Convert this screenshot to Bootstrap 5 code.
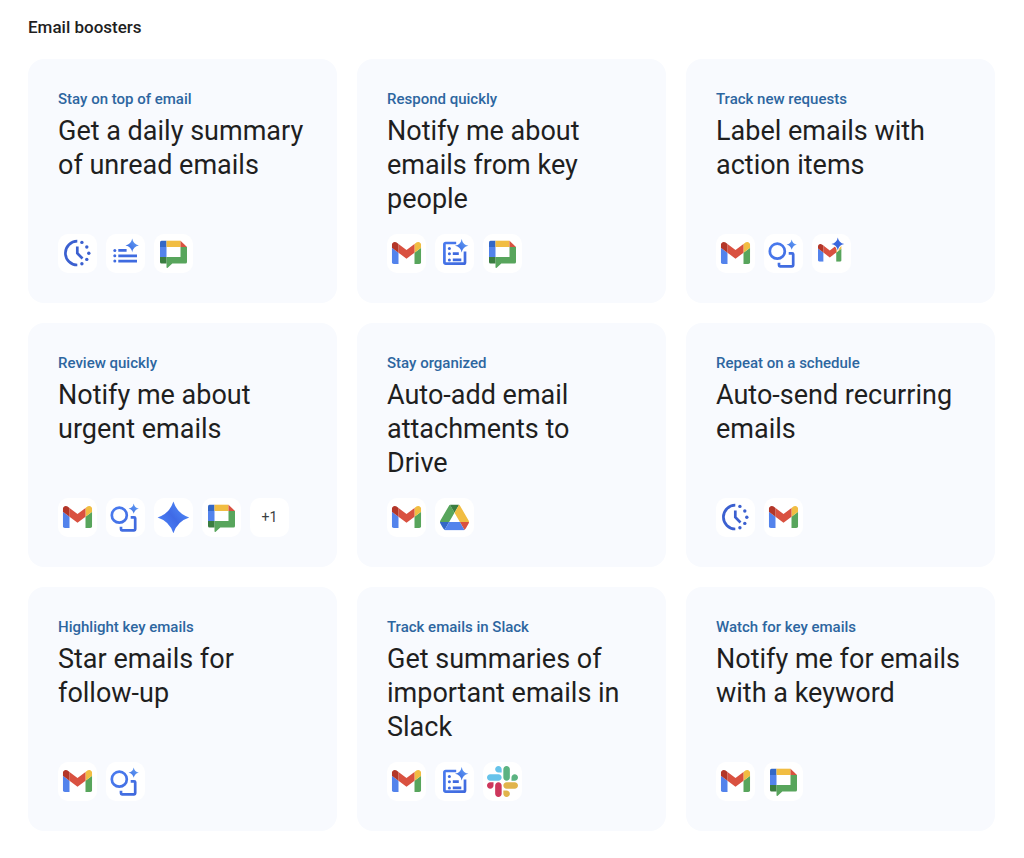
<!DOCTYPE html>
<html lang="en">
<head>
<meta charset="utf-8">
<meta name="viewport" content="width=device-width, initial-scale=1">
<title>Email boosters</title>
<link href="https://cdn.jsdelivr.net/npm/bootstrap@5.3.0/dist/css/bootstrap.min.css" rel="stylesheet">
<style>
  body { font-family: Roboto, "Liberation Sans", sans-serif; color: #1f1f1f; background: #fff; }
  .page { padding: 15px 29px 28px 28px; }
  .section-title { font-size: 17px; line-height: 24px; font-weight: 500; margin-bottom: 20px; }
  .booster-grid { --bs-gutter-x: 20px; --bs-gutter-y: 20px; }
  .booster { min-height: 244px; padding: 30px; border: 0; border-radius: 16px; background: #f8fafe; color: inherit; }
  .booster:hover { background: #f0f4fc; }
  .eyebrow { font-size: 15px; line-height: 20px; font-weight: 500; color: #2d66a0; margin-bottom: 5px; }
  .booster-title { font-size: 27px; line-height: 34px; font-weight: 400; margin-bottom: 16px; }
  .tiles { gap: 9px; }
  .tile { width: 39px; height: 39px; border-radius: 10px; background: #fff; font-size: 14px; color: #3c4043; }
  .tile svg { width: 39px; height: 39px; display: block; }
</style>
</head>
<body>
<svg width="0" height="0" class="position-absolute" aria-hidden="true">
  <defs>
    <linearGradient id="spark" gradientUnits="userSpaceOnUse" x1="20" y1="17" x2="33" y2="6">
      <stop offset="0" stop-color="#3563e0"/><stop offset="1" stop-color="#67a3f5"/>
    </linearGradient>
    <linearGradient id="line" gradientUnits="userSpaceOnUse" x1="6" y1="8" x2="32" y2="32">
      <stop offset="0" stop-color="#4a7cf0"/><stop offset="1" stop-color="#3f68dc"/>
    </linearGradient>
    <linearGradient id="star" gradientUnits="userSpaceOnUse" x1="8" y1="28" x2="30" y2="10">
      <stop offset="0" stop-color="#4c80f5"/><stop offset=".5" stop-color="#3f6ae6"/><stop offset="1" stop-color="#4d86f5"/>
    </linearGradient>
    <symbol id="i-clock" viewBox="0 0 39 39">
      <g fill="none" stroke="#3b60d0" stroke-width="2.7">
        <path d="M19.3 7.2A11.9 11.9 0 0 0 19.3 31"/><path d="M19.3 12.5v6.800l5.200 5.200"/>
      </g>
      <g fill="#3b60d0"><circle cx="23.9" cy="8.4" r="1.7"/><circle cx="28.8" cy="13" r="1.7"/><circle cx="30.8" cy="19.2" r="1.7"/><circle cx="28.8" cy="25.4" r="1.7"/><circle cx="23.9" cy="29.8" r="1.7"/></g>
    </symbol>
    <symbol id="i-list" viewBox="0 0 39 39">
      <g fill="#3f6be0"><circle cx="8.8" cy="16.4" r="1.5"/><circle cx="8.8" cy="21.8" r="1.5"/><circle cx="8.8" cy="27.1" r="1.5"/>
      <path d="M12.3 15.1h8.300v2.700h-8.300zM12.300 20.500H31v2.700H12.300zM12.300 25.800H31v2.700H12.300z"/></g>
      <path fill="url(#spark)" d="M26.200 4.600q1 5.800 6.700 6.800-5.700 1-6.700 6.800-1-5.800-6.700-6.800 5.700-1 6.700-6.800z"/>
    </symbol>
    <symbol id="i-doc" viewBox="0 0 39 39">
      <path fill="none" stroke="url(#line)" stroke-width="2.700" d="M21.200 9H10.600a1.200 1.200 0 0 0-1.200 1.200v18.200a1.200 1.200 0 0 0 1.200 1.200h18.200a1.200 1.200 0 0 0 1.200-1.200V17.500"/>
      <g fill="#3f6be0"><circle cx="14.400" cy="14.400" r="1.500"/><circle cx="14.400" cy="19.700" r="1.500"/><circle cx="14.400" cy="26" r="1.500"/>
      <path d="M17.800 18.300h6v2.700h-6zM17.800 24.600h8.500v2.700h-8.500z"/></g>
      <path fill="url(#spark)" d="M26.700 4.900q1 5.800 6.700 6.800-5.700 1-6.700 6.800-1-5.800-6.700-6.800 5.700-1 6.700-6.800z"/>
    </symbol>
    <symbol id="i-extract" viewBox="0 0 39 39">
      <g fill="none" stroke="url(#line)" stroke-width="2.700"><circle cx="13.300" cy="17.200" r="7.500"/>
      <path d="M24.700 19.300h3.500a1 1 0 0 1 1 1v11a1 1 0 0 1-1 1H16a1 1 0 0 1-1-1v-2.600"/></g>
      <path fill="url(#spark)" d="M27.700 5.600q.8 4.300 5.100 5.100-4.300.8-5.100 5.100-.8-4.300-5.100-5.100 4.300-.8 5.100-5.100z"/>
    </symbol>
    <symbol id="i-star" viewBox="0 0 39 39">
      <path fill="url(#star)" d="M19.400 3.600Q23.200 15.600 35.200 19.400 23.200 23.200 19.400 35.200 15.600 23.200 3.600 19.400 15.600 15.600 19.400 3.600z"/>
    </symbol>
    <symbol id="i-chat" viewBox="0 0 39 39">
      <path fill="#5383ec" d="M6 13h6.500v10H6z"/>
      <path fill="#3367c6" d="M7.500 6.700h5V13H6V8.200a1.500 1.500 0 0 1 1.500-1.500z"/>
      <path fill="#f1bd42" d="M12.500 6.700h14V13h-14z"/>
      <path fill="#d95140" d="M26.500 6.700l6.500 6.300h-6.500z"/>
      <path fill="#58a55c" d="M26.500 13H33v14.900a1.500 1.500 0 0 1-1.500 1.500H18.300l-4.600 4.400q-1 .8-1.200-.5V23h14z"/>
      <path fill="#3a7d40" d="M6 23h6.500v6.400h-5A1.500 1.500 0 0 1 6 27.900z"/>
    </symbol>
    <symbol id="gmail-mark" viewBox="52 42 88 66">
      <path fill="#5383ec" d="M58 108h14V74L52 59v43c0 3.320 2.690 6 6 6"/>
      <path fill="#58a55c" d="M120 108h14c3.320 0 6-2.690 6-6V59l-20 15"/>
      <path fill="#f1bd42" d="M120 48v26l20-15v-8c0-7.420-8.470-11.650-14.400-7.200"/>
      <path fill="#d95140" d="M72 74V48l24 18 24-18v26L96 92"/>
      <path fill="#b33628" d="M52 51v8l20 15V48l-5.600-4.200c-5.940-4.450-14.400-.220-14.400 7.200"/>
    </symbol>
    <symbol id="i-gmail" viewBox="0 0 39 39"><use href="#gmail-mark" x="4.800" y="8" width="29.400" height="22"/></symbol>
    <symbol id="i-gmail-ai" viewBox="0 0 39 39">
      <use href="#gmail-mark" x="6" y="10" width="23.600" height="17.700"/>
      <path fill="#fff" d="M25.800 1.500q1.300 7 8.300 8.400-7 1.400-8.300 8.400-1.300-7-8.300-8.400 7-1.400 8.300-8.400z"/>
      <path fill="#3b68dd" d="M25.800 3.500q1 5.500 6.400 6.400-5.400 1-6.400 6.400-1-5.400-6.400-6.400 5.400-.900 6.400-6.400z"/>
    </symbol>
    <symbol id="drive-mark" viewBox="0 0 87.300 78">
      <path fill="#3367c6" d="M6.600 66.850l3.850 6.650c.8 1.400 1.950 2.500 3.300 3.300L27.500 53H0c0 1.550.4 3.100 1.200 4.500z"/>
      <path fill="#58a55c" d="M43.650 25L29.900 1.200c-1.350.8-2.500 1.900-3.300 3.300l-25.400 44A9.060 9.060 0 0 0 0 53h27.500z"/>
      <path fill="#d95140" d="M73.550 76.800c1.350-.8 2.500-1.900 3.300-3.300l1.600-2.750 7.650-13.250c.8-1.400 1.200-2.950 1.200-4.500H59.800z"/>
      <path fill="#3a7d40" d="M43.650 25L57.400 1.200C56.050.4 54.500 0 52.900 0H34.400c-1.600 0-3.150.45-4.500 1.200z"/>
      <path fill="#5383ec" d="M59.800 53H27.500L13.750 76.800c1.350.8 2.900 1.200 4.500 1.200h50.800c1.600 0 3.150-.45 4.500-1.200z"/>
      <path fill="#f1bd42" d="M73.400 26.500l-12.700-22c-.8-1.400-1.950-2.500-3.300-3.300L43.650 25 59.800 53h27.450c0-1.550-.4-3.100-1.200-4.500z"/>
    </symbol>
    <symbol id="i-drive" viewBox="0 0 39 39"><use href="#drive-mark" x="5" y="6.400" width="29" height="26"/></symbol>
    <symbol id="slack-mark" viewBox="0 0 122.800 122.800">
      <path fill="#cd375c" d="M25.800 77.600c0 7.100-5.800 12.900-12.900 12.900S0 84.700 0 77.600s5.800-12.900 12.900-12.900h12.900v12.900zm6.500 0c0-7.100 5.800-12.900 12.900-12.900s12.900 5.800 12.900 12.900v32.300c0 7.100-5.800 12.900-12.900 12.900s-12.900-5.800-12.900-12.900V77.600z"/>
      <path fill="#67c3ea" d="M45.200 25.800c-7.100 0-12.900-5.800-12.900-12.900S38.100 0 45.200 0s12.900 5.800 12.900 12.900v12.900H45.200zm0 6.500c7.100 0 12.900 5.800 12.900 12.900s-5.800 12.900-12.900 12.900H12.900C5.800 58.100 0 52.300 0 45.200s5.800-12.900 12.900-12.900h32.300z"/>
      <path fill="#5bb381" d="M97 45.200c0-7.100 5.800-12.900 12.900-12.900s12.900 5.800 12.900 12.900-5.800 12.900-12.900 12.900H97V45.200zm-6.500 0c0 7.100-5.800 12.900-12.900 12.900s-12.900-5.800-12.900-12.900V12.900C64.700 5.800 70.500 0 77.600 0s12.900 5.800 12.900 12.900v32.300z"/>
      <path fill="#e1b44c" d="M77.600 97c7.100 0 12.900 5.800 12.900 12.900s-5.800 12.900-12.900 12.900-12.900-5.800-12.900-12.900V97h12.900zm0-6.500c-7.100 0-12.900-5.800-12.900-12.900s5.800-12.900 12.900-12.900h32.300c7.100 0 12.900 5.800 12.900 12.900s-5.800 12.900-12.900 12.900H77.600z"/>
    </symbol>
    <symbol id="i-slack" viewBox="0 0 39 39"><use href="#slack-mark" x="4" y="4" width="31" height="31"/></symbol>
  </defs>
</svg>

<main class="page container-fluid">
  <h1 class="section-title">Email boosters</h1>
  <div class="row row-cols-1 row-cols-sm-2 row-cols-lg-3 booster-grid">
    <div class="col"><a href="#daily-summary" class="card booster h-100 text-decoration-none">
      <p class="eyebrow">Stay on top of email</p>
      <h2 class="booster-title">Get a daily summary of unread emails</h2>
      <div class="tiles d-flex mt-auto">
        <span class="tile"><svg role="img" aria-label="Schedule"><use href="#i-clock"/></svg></span>
        <span class="tile"><svg role="img" aria-label="Recap"><use href="#i-list"/></svg></span>
        <span class="tile"><svg role="img" aria-label="Chat"><use href="#i-chat"/></svg></span>
      </div></a></div>
    <div class="col"><a href="#key-people" class="card booster h-100 text-decoration-none">
      <p class="eyebrow">Respond quickly</p>
      <h2 class="booster-title">Notify me about emails from key people</h2>
      <div class="tiles d-flex mt-auto">
        <span class="tile"><svg role="img" aria-label="Gmail"><use href="#i-gmail"/></svg></span>
        <span class="tile"><svg role="img" aria-label="Summarize"><use href="#i-doc"/></svg></span>
        <span class="tile"><svg role="img" aria-label="Chat"><use href="#i-chat"/></svg></span>
      </div></a></div>
    <div class="col"><a href="#action-items" class="card booster h-100 text-decoration-none">
      <p class="eyebrow">Track new requests</p>
      <h2 class="booster-title">Label emails with action items</h2>
      <div class="tiles d-flex mt-auto">
        <span class="tile"><svg role="img" aria-label="Gmail"><use href="#i-gmail"/></svg></span>
        <span class="tile"><svg role="img" aria-label="Extract"><use href="#i-extract"/></svg></span>
        <span class="tile"><svg role="img" aria-label="Gmail with AI"><use href="#i-gmail-ai"/></svg></span>
      </div></a></div>
    <div class="col"><a href="#urgent" class="card booster h-100 text-decoration-none">
      <p class="eyebrow">Review quickly</p>
      <h2 class="booster-title">Notify me about urgent emails</h2>
      <div class="tiles d-flex mt-auto">
        <span class="tile"><svg role="img" aria-label="Gmail"><use href="#i-gmail"/></svg></span>
        <span class="tile"><svg role="img" aria-label="Extract"><use href="#i-extract"/></svg></span>
        <span class="tile"><svg role="img" aria-label="Gemini"><use href="#i-star"/></svg></span>
        <span class="tile"><svg role="img" aria-label="Chat"><use href="#i-chat"/></svg></span>
        <span class="tile d-flex align-items-center justify-content-center">+1</span>
      </div></a></div>
    <div class="col"><a href="#attachments" class="card booster h-100 text-decoration-none">
      <p class="eyebrow">Stay organized</p>
      <h2 class="booster-title">Auto-add email attachments to Drive</h2>
      <div class="tiles d-flex mt-auto">
        <span class="tile"><svg role="img" aria-label="Gmail"><use href="#i-gmail"/></svg></span>
        <span class="tile"><svg role="img" aria-label="Drive"><use href="#i-drive"/></svg></span>
      </div></a></div>
    <div class="col"><a href="#recurring" class="card booster h-100 text-decoration-none">
      <p class="eyebrow">Repeat on a schedule</p>
      <h2 class="booster-title">Auto-send recurring emails</h2>
      <div class="tiles d-flex mt-auto">
        <span class="tile"><svg role="img" aria-label="Schedule"><use href="#i-clock"/></svg></span>
        <span class="tile"><svg role="img" aria-label="Gmail"><use href="#i-gmail"/></svg></span>
      </div></a></div>
    <div class="col"><a href="#follow-up" class="card booster h-100 text-decoration-none">
      <p class="eyebrow">Highlight key emails</p>
      <h2 class="booster-title">Star emails for<br>follow-up</h2>
      <div class="tiles d-flex mt-auto">
        <span class="tile"><svg role="img" aria-label="Gmail"><use href="#i-gmail"/></svg></span>
        <span class="tile"><svg role="img" aria-label="Extract"><use href="#i-extract"/></svg></span>
      </div></a></div>
    <div class="col"><a href="#slack" class="card booster h-100 text-decoration-none">
      <p class="eyebrow">Track emails in Slack</p>
      <h2 class="booster-title">Get summaries of important emails in Slack</h2>
      <div class="tiles d-flex mt-auto">
        <span class="tile"><svg role="img" aria-label="Gmail"><use href="#i-gmail"/></svg></span>
        <span class="tile"><svg role="img" aria-label="Summarize"><use href="#i-doc"/></svg></span>
        <span class="tile"><svg role="img" aria-label="Slack"><use href="#i-slack"/></svg></span>
      </div></a></div>
    <div class="col"><a href="#keyword" class="card booster h-100 text-decoration-none">
      <p class="eyebrow">Watch for key emails</p>
      <h2 class="booster-title">Notify me for emails with a keyword</h2>
      <div class="tiles d-flex mt-auto">
        <span class="tile"><svg role="img" aria-label="Gmail"><use href="#i-gmail"/></svg></span>
        <span class="tile"><svg role="img" aria-label="Chat"><use href="#i-chat"/></svg></span>
      </div></a></div>
  </div>
</main>
<script src="https://cdn.jsdelivr.net/npm/bootstrap@5.3.0/dist/js/bootstrap.bundle.min.js"></script>
</body>
</html>
